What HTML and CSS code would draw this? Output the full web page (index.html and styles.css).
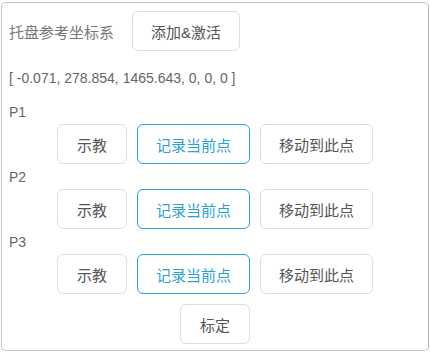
FILE: index.html
```html
<!DOCTYPE html>
<html lang="zh-CN">
<head>
    <meta charset="UTF-8">
    <title>托盘参考坐标系</title>
    <link rel="stylesheet" href="styles.css">
</head>
<body>
    <div class="panel">
        <div class="header">
            <span class="title">托盘参考坐标系</span>
            <button class="btn">添加&amp;激活</button>
        </div>
        <div class="coords">[ -0.071, 278.854, 1465.643, 0, 0, 0 ]</div>

        <div class="point">
            <div class="point-name">P1</div>
            <div class="btn-row">
                <button class="btn">示教</button>
                <button class="btn btn-blue">记录当前点</button>
                <button class="btn">移动到此点</button>
            </div>
        </div>
        <div class="point">
            <div class="point-name">P2</div>
            <div class="btn-row">
                <button class="btn">示教</button>
                <button class="btn btn-blue">记录当前点</button>
                <button class="btn">移动到此点</button>
            </div>
        </div>
        <div class="point">
            <div class="point-name">P3</div>
            <div class="btn-row">
                <button class="btn">示教</button>
                <button class="btn btn-blue">记录当前点</button>
                <button class="btn">移动到此点</button>
            </div>
        </div>

        <div class="btn-row calib-row">
            <button class="btn">标定</button>
        </div>
    </div>
</body>
</html>
```

FILE: styles.css
```css
body {
    margin: 0;
    padding: 0;
    background: #fff;
    font-family: 'Liberation Sans', 'Noto Sans CJK SC', sans-serif;
    color: #606266;
}
.panel {
    margin: 2px 1px;
    padding: 8px 6px 6px 6px;
    border: 1px solid #c6c6c6;
    border-right-color: #b4b4b4;
    border-radius: 5px;
}
.header {
    display: flex;
    align-items: center;
    gap: 18px;
    padding-left: 1px;
}
.title {
    font-size: 15px;
    color: #777;
}
.btn {
    box-sizing: border-box;
    height: 40px;
    min-width: 70px;
    padding: 0 18px;
    background: #fff;
    border: 1px solid #dcdfe6;
    border-radius: 6px;
    font-family: 'Liberation Sans', 'Noto Sans CJK SC', sans-serif;
    font-size: 15px;
    color: #555;
    cursor: pointer;
}
.btn-blue {
    border-color: #2a9fd8;
    color: #2a9fd8;
}
.coords {
    margin-top: 17px;
    margin-bottom: 14px;
    padding-left: 1px;
    font-size: 14px;
    line-height: 20px;
    color: #666;
}
.point-name {
    margin-top: 3px;
    padding-left: 1px;
    font-size: 14px;
    line-height: 20px;
    color: #666;
}
.btn-row {
    display: flex;
    justify-content: center;
    gap: 10px;
    margin-top: 2px;
}
.calib-row {
    margin-top: 10px;
}
```
